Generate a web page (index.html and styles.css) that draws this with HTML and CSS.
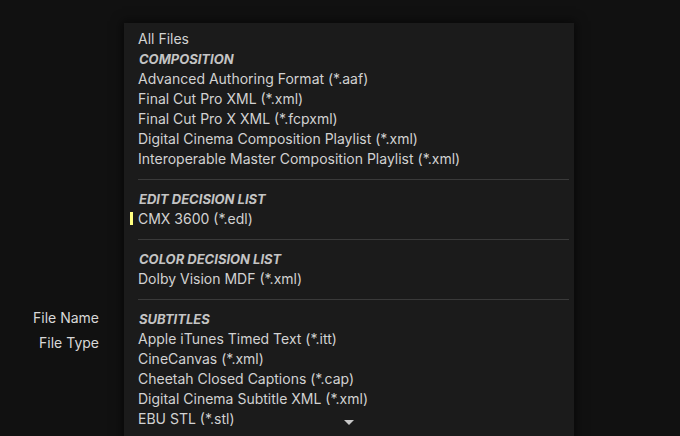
FILE: index.html
```html
<!DOCTYPE html>
<html>
<head>
<meta charset="utf-8">
<link rel="stylesheet" href="styles.css">
</head>
<body>
<div class="dialog">
  <div class="fields">
    <div class="field-label">File Name</div>
    <div class="field-label">File Type</div>
  </div>
  <div class="menu">
    <div class="item">All Files</div>
    <div class="header">COMPOSITION</div>
    <div class="item">Advanced Authoring Format (*.aaf)</div>
    <div class="item">Final Cut Pro XML (*.xml)</div>
    <div class="item">Final Cut Pro X XML (*.fcpxml)</div>
    <div class="item">Digital Cinema Composition Playlist (*.xml)</div>
    <div class="item">Interoperable Master Composition Playlist (*.xml)</div>
    <div class="sep"></div>
    <div class="header">EDIT DECISION LIST</div>
    <div class="item selected">CMX 3600 (*.edl)</div>
    <div class="sep"></div>
    <div class="header">COLOR DECISION LIST</div>
    <div class="item">Dolby Vision MDF (*.xml)</div>
    <div class="sep"></div>
    <div class="header">SUBTITLES</div>
    <div class="item">Apple iTunes Timed Text (*.itt)</div>
    <div class="item">CineCanvas (*.xml)</div>
    <div class="item">Cheetah Closed Captions (*.cap)</div>
    <div class="item">Digital Cinema Subtitle XML (*.xml)</div>
    <div class="item">EBU STL (*.stl)</div>
    <div class="more"><span class="arrow"></span></div>
  </div>
</div>
</body>
</html>
```
FILE: styles.css
```css
html, body {
  margin: 0;
  padding: 0;
  background: #111111;
  width: 680px;
  height: 436px;
  overflow: hidden;
  font-family: Inter, "Liberation Sans", Arial, sans-serif;
}
.dialog {
  position: relative;
  width: 680px;
  height: 436px;
}
.fields {
  display: flex;
  flex-direction: column;
  align-items: flex-end;
  width: 99px;
  padding-top: 308px;
  gap: 5px;
}
.field-label {
  color: #d8d8d8;
  font-size: 14px;
  line-height: 20px;
}
.menu {
  position: absolute;
  left: 124px;
  top: 23px;
  width: 450px;
  height: 430px;
  background: #1b1b1b;
  box-shadow: 0 0 10px 2px rgba(0,0,0,0.55);
  padding: 6px 5px 0 14px;
  box-sizing: border-box;
  display: flex;
  flex-direction: column;
}
.item, .header {
  position: relative;
  height: 20px;
  line-height: 20px;
  font-size: 14px;
  color: #d2d2d2;
  white-space: nowrap;
}
.header {
  font-size: 13px;
  font-weight: bold;
  font-style: italic;
  color: #c4c4c4;
  padding-left: 1px;
}
.item.selected::before {
  content: "";
  position: absolute;
  left: -8px;
  top: 3px;
  width: 3px;
  height: 13px;
  background: #ffff80;
}
.sep {
  height: 20px;
  display: flex;
  align-items: center;
}
.sep::after {
  content: "";
  display: block;
  flex: 1;
  height: 1px;
  background: #3a3a3a;
}
.more {
  height: 10px;
  display: flex;
  justify-content: flex-start;
  padding-left: 206px;
  margin-top: -9px;
}
.arrow {
  width: 0;
  height: 0;
  border-left: 5px solid transparent;
  border-right: 5px solid transparent;
  border-top: 5px solid #c8c8c8;
}
```
